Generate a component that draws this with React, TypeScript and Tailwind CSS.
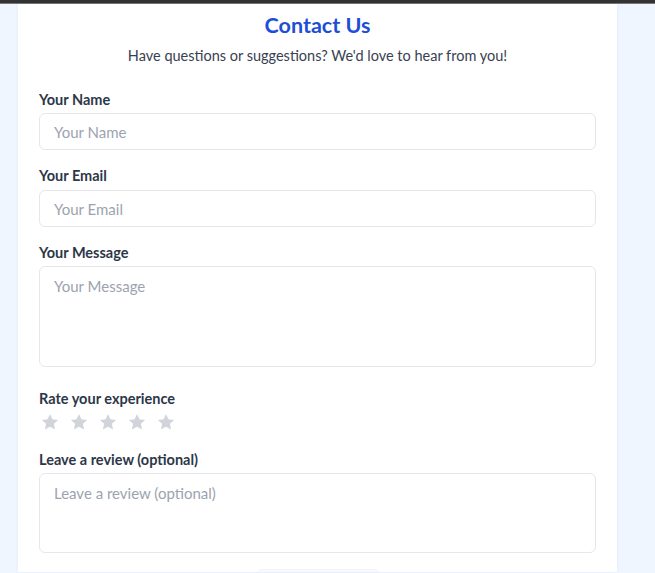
import React from "react";

const Star = () => (
  <svg width="20" height="20" viewBox="0 0 24 24" fill="#d1d5db">
    <path d="M12 2.5l2.94 6.26 6.86.8-5.08 4.68 1.36 6.76L12 17.6l-6.08 3.4 1.36-6.76L2.2 9.56l6.86-.8z" />
  </svg>
);

export default function App() {
  const font = { fontFamily: 'Lato, "Open Sans", sans-serif' };
  const label = "block text-[14.5px] leading-[20px] font-bold text-[#2d3748]";
  const field =
    "block w-full rounded-md border border-[#e5e7eb] px-[14px] text-[15px] text-[#1f2937] placeholder:text-[#9ca3af] outline-none";
  return (
    <div className="min-h-[573px] bg-[#eff6ff]" style={font}>
      <div className="h-[4px] bg-[#333333] border-b border-[#777]" />
      <div className="ml-[18px] w-[599px] bg-white shadow-[0_0_4px_rgba(0,0,0,0.06)] px-[21px] pt-[5px] pb-8 h-[568px] overflow-hidden">
        <h1 className="text-center text-[21.5px] leading-[32px] font-bold text-[#1d4ed8]">Contact Us</h1>
        <p className="text-center text-[14.5px] leading-[24px] text-[#374151] mt-[3px]">
          Have questions or suggestions? We'd love to hear from you!
        </p>

        <label className={`${label} mt-[22px]`}>Your Name</label>
        <input className={`${field} mt-[3px] h-[37px]`} placeholder="Your Name" />

        <label className={`${label} mt-[16px]`}>Your Email</label>
        <input className={`${field} mt-[4px] h-[37px]`} placeholder="Your Email" />

        <label className={`${label} mt-[16px]`}>Your Message</label>
        <textarea className={`${field} mt-[3px] h-[101px] py-[8px] resize-none`} placeholder="Your Message" />

        <label className={`${label} mt-[22px]`}>Rate your experience</label>
        <div className="mt-[3px] flex gap-[9px] pl-[1px]">
          <Star />
          <Star />
          <Star />
          <Star />
          <Star />
        </div>

        <label className={`${label} mt-[18px]`}>Leave a review (optional)</label>
        <textarea className={`${field} mt-[3px] h-[80px] py-[8px] resize-none`} placeholder="Leave a review (optional)" />

        <div className="mt-[16px] mx-auto w-[124px] h-[40px] rounded-md bg-[#f9fafb] border border-[#f3f4f6]" />
      </div>
    </div>
  );
}
